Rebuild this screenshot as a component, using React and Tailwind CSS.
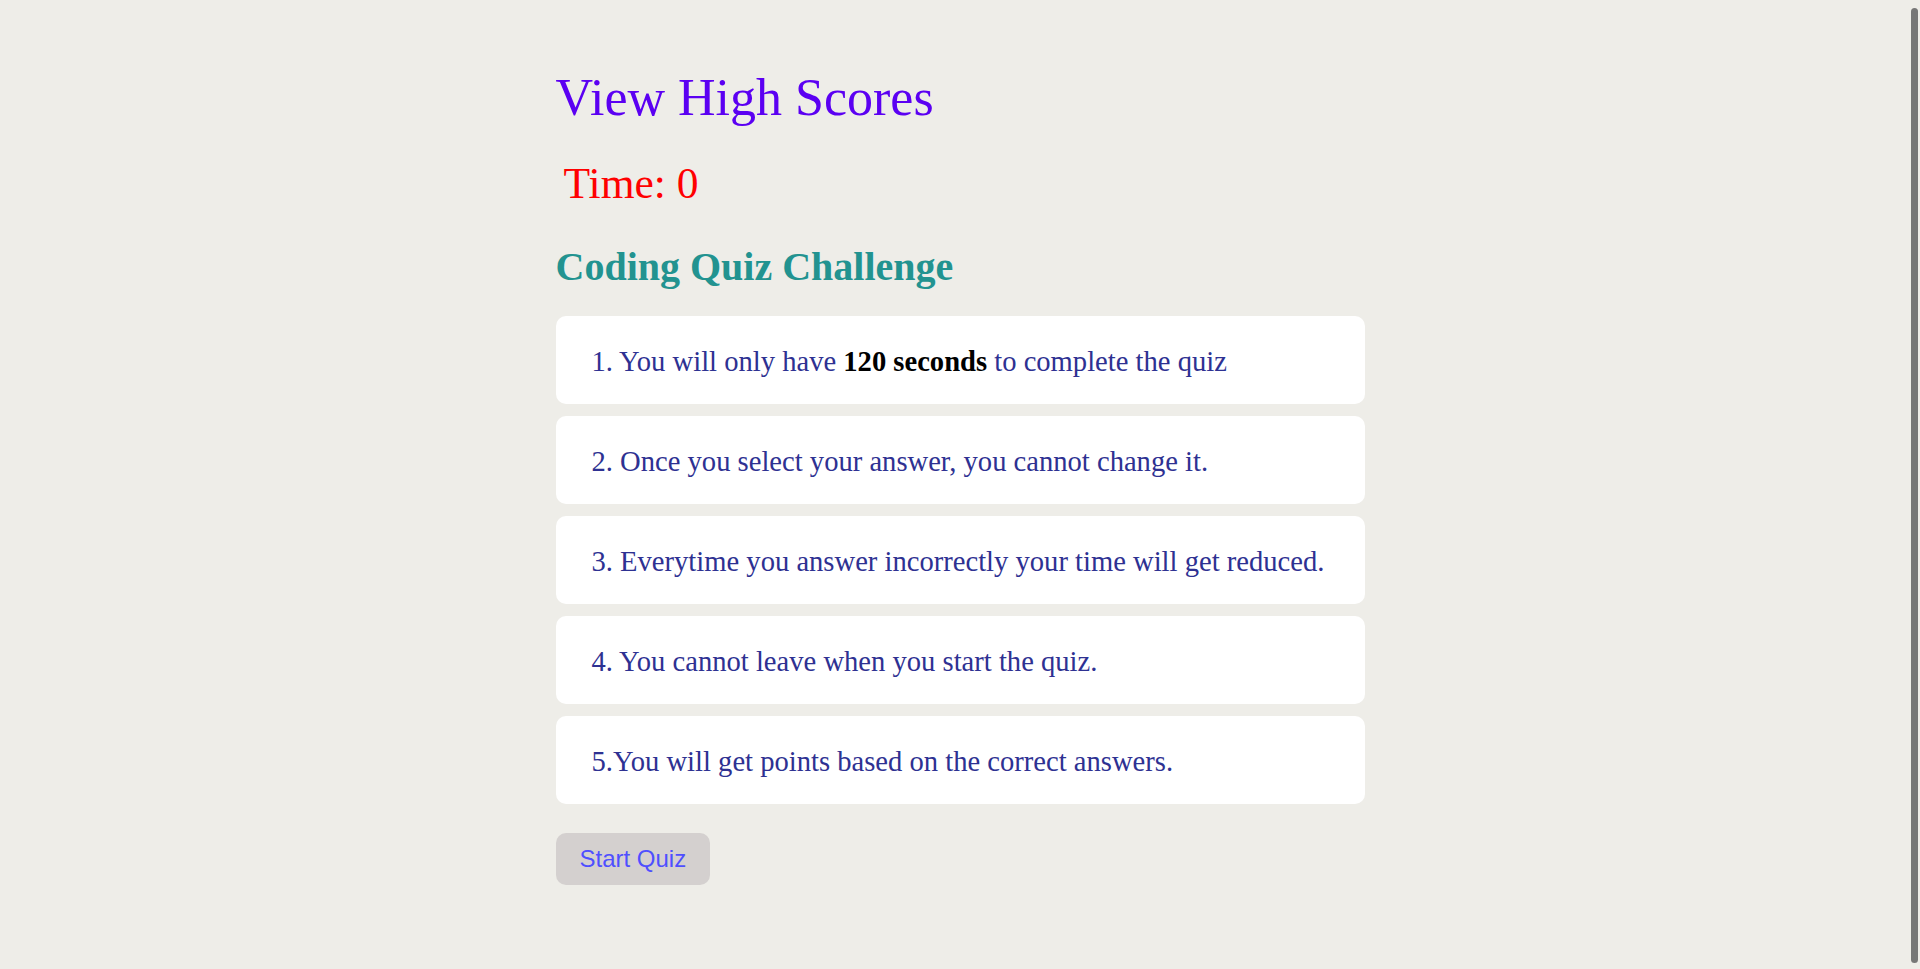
export default function App() {
    const rules = [
        <>1. You will only have <b className="font-bold text-black">120 seconds</b> to complete the quiz</>,
        <>2. Once you select your answer, you cannot change it.</>,
        <>3. Everytime you answer incorrectly your time will get reduced.</>,
        <>4. You cannot leave when you start the quiz.</>,
        <>5.You will get points based on the correct answers.</>,
    ];

    return (
        <div className="min-h-screen bg-[#eeede8] font-['Liberation_Serif',serif]">
            <div className="w-[809px] mx-auto pt-[68px] pb-[80px]">
                <a className="block text-[52px] leading-[60px] text-[#5b00f2]">View High Scores</a>
                <div className="mt-[30px] pl-[8px] text-[43.5px] leading-[50px] text-[#ff0000]">Time: 0</div>
                <h1 className="mt-[35px] text-[40px] leading-[48px] font-bold text-[#229390]">Coding Quiz Challenge</h1>

                <div className="mt-[25px] flex flex-col gap-[12px]">
                    {rules.map((r, i) => (
                        <div key={i} className="h-[88px] flex items-center bg-white rounded-[10px] pl-[36px] pt-[4px] text-[28.6px] text-[#2e3192]">
                            <p>{r}</p>
                        </div>
                    ))}
                </div>

                <button className="mt-[29px] h-[52px] px-[24px] rounded-[10px] bg-[#d4d0cf] text-[#4f4fff] text-[24px] font-['Liberation_Sans',sans-serif]">
                    Start Quiz
                </button>
            </div>

            {/* overlay scrollbar thumb */}
            <div className="fixed right-[2px] top-[8px] bottom-[6px] w-[7px] rounded-full bg-[#777777]" />
        </div>
    );
}
